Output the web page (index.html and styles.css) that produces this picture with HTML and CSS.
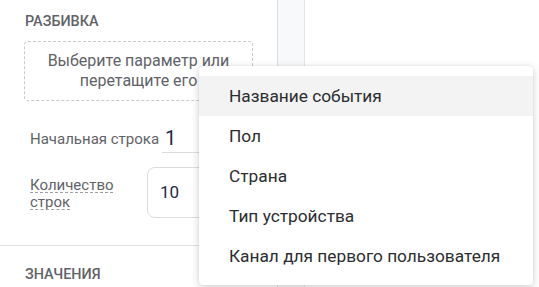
FILE: index.html
```html
<!DOCTYPE html>
<html lang="ru">
<head>
<meta charset="utf-8">
<link rel="stylesheet" href="styles.css">
</head>
<body>
<div class="page">
  <aside class="panel">
    <section class="section">
      <h2 class="section-title">Разбивка</h2>
      <div class="dropzone">Выберите параметр или<br>перетащите его</div>
      <div class="row row-start">
        <span class="label">Начальная строка</span>
        <span class="line-input">1</span>
      </div>
      <div class="row row-count">
        <span class="label label-dashed">Количество<br>строк</span>
        <span class="box-input">10</span>
      </div>
    </section>
    <section class="section section-values">
      <h2 class="section-title">Значения</h2>
    </section>
  </aside>
  <div class="strip"></div>
  <main class="canvas"></main>
</div>
<ul class="menu">
  <li class="menu-item active">Название события</li>
  <li class="menu-item">Пол</li>
  <li class="menu-item">Страна</li>
  <li class="menu-item">Тип устройства</li>
  <li class="menu-item">Канал для первого пользователя</li>
</ul>
</body>
</html>
```
FILE: styles.css
```css
html, body {
  margin: 0;
  padding: 0;
  height: 100%;
  overflow: hidden;
  background: #fff;
  font-family: Roboto, "Noto Sans", sans-serif;
}
.page {
  display: flex;
  height: 287px;
}
.panel {
  width: 278px;
  border-right: 1px solid #dadce0;
  box-sizing: border-box;
  flex: none;
}
.strip {
  width: 26px;
  background: #f8f9fa;
  border-right: 1px solid #e3e5e8;
  flex: none;
}
.canvas {
  flex: 1;
}
.section {
  padding: 14px 24px 0 24px;
}
.section-title {
  margin: 0;
  font-size: 14.4px;
  line-height: 16px;
  font-weight: 500;
  text-transform: uppercase;
  color: #5f6368;
  padding-left: 1px;
}
.dropzone {
  margin-top: 11px;
  width: 229px;
  height: 60px;
  box-sizing: border-box;
  border: 1px dashed #c8cacd;
  border-radius: 4px;
  display: flex;
  align-items: center;
  justify-content: center;
  text-align: center;
  font-size: 16px;
  line-height: 20px;
  color: #5f6368;
}
.row {
  display: flex;
  align-items: center;
  padding-left: 6px;
}
.row-start {
  margin-top: 22px;
  height: 30px;
  align-items: flex-start;
}
.label {
  font-size: 15px;
  line-height: 16px;
  color: #5f6368;
}
.row-start .label {
  margin-top: 8px;
}
.line-input {
  margin-left: 3px;
  width: 60px;
  height: 30px;
  box-sizing: border-box;
  border-bottom: 1px solid #dadce0;
  font-size: 20px;
  font-weight: 400;
  line-height: 30px;
  color: #1f2a44;
  padding-left: 3px;
}
.row-count {
  margin-top: 14px;
  height: 51px;
}
.label-dashed {
  text-decoration: underline dashed #9aa0a6;
  text-underline-offset: 2px;
  text-decoration-thickness: 1px;
  width: 117px;
  line-height: 17px;
  padding-top: 3px;
}
.box-input {
  width: 80px;
  height: 51px;
  box-sizing: border-box;
  border: 1px solid #dadce0;
  border-radius: 8px;
  font-size: 17px;
  line-height: 49px;
  padding-left: 12px;
  color: #1f2a44;
}
.section-values {
  margin-top: 27px;
  border-top: 1px solid #e0e0e0;
  padding-top: 21px;
}
.menu {
  position: absolute;
  left: 199px;
  top: 66px;
  width: 334px;
  margin: 0;
  padding: 10px 0 9px;
  list-style: none;
  background: #fff;
  border-radius: 4px;
  box-shadow: 0 2px 8px rgba(0,0,0,0.18), 0 0 2px rgba(0,0,0,0.08);
}
.menu-item {
  height: 40px;
  line-height: 40px;
  padding-left: 30px;
  font-size: 17.3px;
  color: #2b2d30;
}
.menu-item.active {
  background: #f3f3f3;
}
```
